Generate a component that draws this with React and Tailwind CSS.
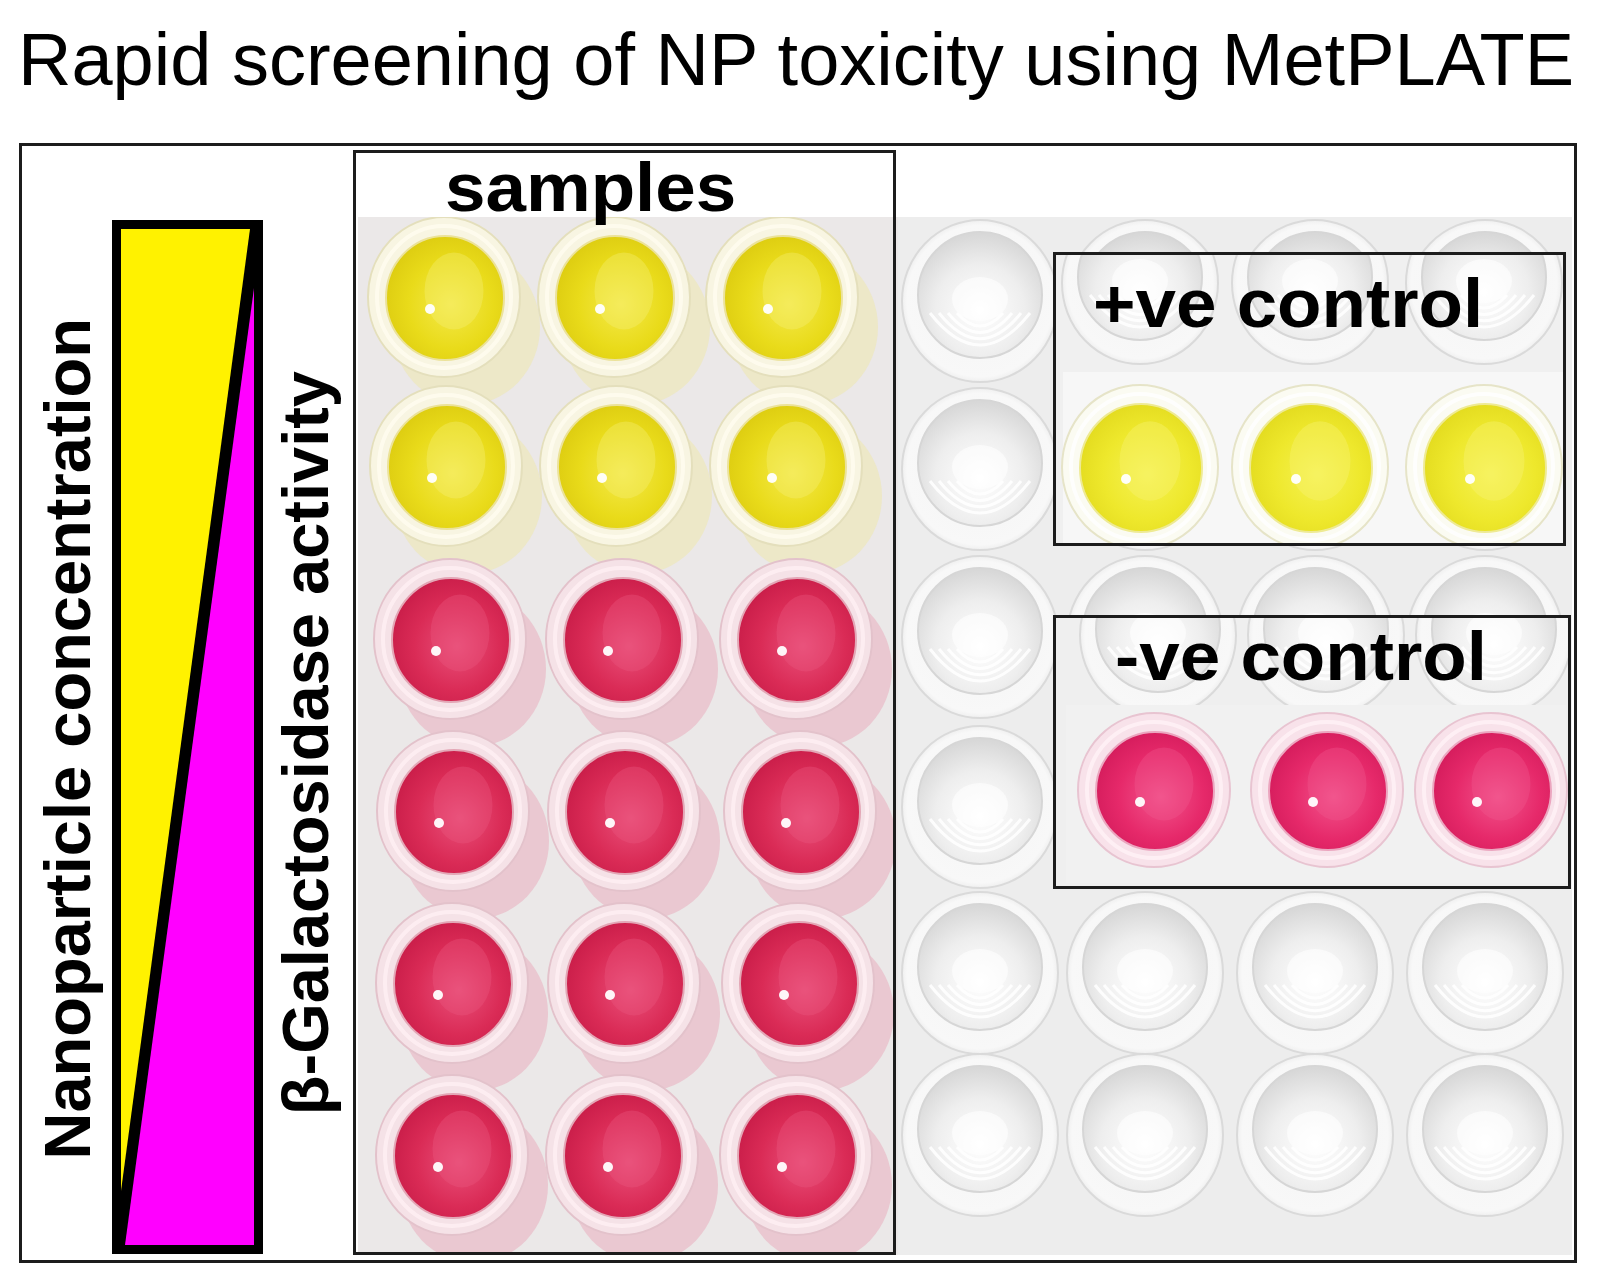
const TONES = {
  yellow: { rim: '#f8f5e2', edge: '#e4dfbc', ring: '#ebe29a', tube: '#efe8a8', glow: '#f7f07a', hi: '#fffdf0' },
  pink: { rim: '#f5e2e7', edge: '#e3c2cb', ring: '#e3a7b6', tube: '#eaa8ba', glow: '#ea5a80', hi: '#fff0f4' },
  cyellow: { rim: '#fbfbf2', edge: '#e6e4c8', ring: '#eeea94', tube: '#f1eebc', glow: '#f8f47a', hi: '#ffffff' },
  cpink: { rim: '#f8e2ea', edge: '#e8c4d1', ring: '#eba6bf', tube: '#f0bccd', glow: '#f25a8e', hi: '#fff2f6' },
};

const SAMPLE_ROWS = [
  { y: 80, tone: 'yellow', xs: [86, 256, 424] },
  { y: 249, tone: 'yellow', xs: [88, 258, 428] },
  { y: 422, tone: 'pink', xs: [92, 264, 438] },
  { y: 594, tone: 'pink', xs: [95, 266, 442] },
  { y: 766, tone: 'pink', xs: [94, 266, 440] },
  { y: 938, tone: 'pink', xs: [94, 264, 438] },
];

const EMPTY_COLS = [622, 787, 957, 1127];
const EMPTY_ROWS = [84, 252, 420, 590, 756, 918];

function Tube({ x, y, tone }) {
  return <ellipse cx={x + 22} cy={y + 30} rx="74" ry="78" fill={TONES[tone].tube} opacity="0.5" />;
}

function FilledWell({ x, y, tone, rx = 76, ry = 80 }) {
  const t = TONES[tone];
  return (
    <g>
      <ellipse cx={x} cy={y} rx={rx} ry={ry} fill={t.rim} stroke={t.edge} strokeWidth="2" />
      <ellipse cx={x} cy={y} rx={rx - 9} ry={ry - 9} fill="none" stroke={t.hi} strokeWidth="4" opacity="0.8" />
      <ellipse cx={x + 1} cy={y + 1} rx={rx - 17} ry={ry - 18} fill={`url(#${tone}Liquid)`} stroke={t.ring} strokeWidth="2" />
      <ellipse cx={x + 10} cy={y - 6} rx={(rx - 17) * 0.5} ry={(ry - 18) * 0.62} fill={t.glow} opacity="0.35" />
      <circle cx={x - 14} cy={y + 12} r="5" fill="#ffffff" opacity="0.95" />
    </g>
  );
}

function EmptyWell({ x, y, rx = 78, ry = 81 }) {
  return (
    <g>
      <ellipse cx={x} cy={y} rx={rx} ry={ry} fill="url(#emptyRim)" stroke="#dadada" strokeWidth="2" />
      <ellipse cx={x} cy={y - 6} rx={rx - 16} ry={ry - 18} fill="url(#emptyIn)" stroke="#d6d6d6" strokeWidth="2" />
      {[0, 9, 18, 27].map((d) => (
        <path
          key={d}
          d={`M ${x - 50 + d} ${y + 12} Q ${x} ${y + 76 - d * 1.4} ${x + 50 - d} ${y + 12}`}
          fill="none"
          stroke="#ffffff"
          strokeWidth="3"
          opacity="0.85"
        />
      ))}
      <ellipse cx={x} cy={y - 2} rx="28" ry="22" fill="#ffffff" opacity="0.6" />
    </g>
  );
}

function Liquid({ id, c0, c1, c2 }) {
  return (
    <radialGradient id={id} cx="55%" cy="55%" r="60%">
      <stop offset="0%" stopColor={c0} />
      <stop offset="60%" stopColor={c1} />
      <stop offset="100%" stopColor={c2} />
    </radialGradient>
  );
}

function PlatePhoto() {
  return (
    <svg width="1214" height="1038" viewBox="0 0 1214 1038" className="block">
      <defs>
        <Liquid id="yellowLiquid" c0="#f4e94a" c1="#e9db1a" c2="#dccb10" />
        <Liquid id="pinkLiquid" c0="#e9507a" c1="#da2b56" c2="#c81c48" />
        <Liquid id="cyellowLiquid" c0="#f5f252" c1="#eee82c" c2="#e2da1e" />
        <Liquid id="cpinkLiquid" c0="#f2548c" c1="#e6296a" c2="#d31b5b" />
        <radialGradient id="emptyRim" cx="50%" cy="50%" r="55%">
          <stop offset="0%" stopColor="#f4f4f4" />
          <stop offset="85%" stopColor="#f8f8f8" />
          <stop offset="100%" stopColor="#e2e2e2" />
        </radialGradient>
        <radialGradient id="emptyIn" cx="50%" cy="62%" r="60%">
          <stop offset="0%" stopColor="#ffffff" />
          <stop offset="60%" stopColor="#eeeeee" />
          <stop offset="100%" stopColor="#d8d8d8" />
        </radialGradient>
        <clipPath id="posClip">
          <rect x="695" y="35" width="513" height="294" />
        </clipPath>
        <clipPath id="negClip">
          <rect x="695" y="398" width="518" height="274" />
        </clipPath>
      </defs>

      <rect width="1214" height="1038" fill="#ededed" />
      <rect width="540" height="1038" fill="#ebe8e8" />

      {EMPTY_ROWS.map((y) =>
        EMPTY_COLS.map((x) => <EmptyWell key={`${x}-${y}`} x={x} y={y} />)
      )}

      {SAMPLE_ROWS.map((r) => r.xs.map((x) => <Tube key={`t${x}-${r.y}`} x={x} y={r.y} tone={r.tone} />))}
      {SAMPLE_ROWS.map((r) => r.xs.map((x) => <FilledWell key={`w${x}-${r.y}`} x={x} y={r.y} tone={r.tone} />))}

      <g clipPath="url(#posClip)">
        <rect x="695" y="35" width="513" height="294" fill="#f0f0f0" />
        {[782, 952, 1126].map((x) => (
          <EmptyWell key={`pe${x}`} x={x} y={66} />
        ))}
        <rect x="705" y="155" width="503" height="174" fill="#f7f7f7" />
        {[782, 952, 1126].map((x) => (
          <FilledWell key={`pw${x}`} x={x} y={250} tone="cyellow" rx={78} ry={82} />
        ))}
      </g>

      <g clipPath="url(#negClip)">
        <rect x="695" y="398" width="518" height="274" fill="#efefef" />
        {[800, 968, 1136].map((x) => (
          <EmptyWell key={`ne${x}`} x={x} y={418} />
        ))}
        <rect x="708" y="488" width="500" height="178" fill="#f1f1f1" />
        {[796, 969, 1133].map((x) => (
          <FilledWell key={`nw${x}`} x={x} y={573} tone="cpink" rx={76} ry={77} />
        ))}
      </g>
    </svg>
  );
}

function GradientBar() {
  return (
    <svg width="151" height="1034" viewBox="0 0 151 1034" className="block ml-[12px] mb-[6px] shrink-0">
      <rect width="151" height="1034" fill="#000000" />
      <polygon points="9,9 138,9 9,971" fill="#fff200" />
      <polygon points="142,68 142,1025 13,1025" fill="#ff00ff" />
    </svg>
  );
}

export default function App() {
  return (
    <div className="w-[1600px] h-[1272px] bg-white overflow-hidden font-['Liberation_Sans',Arial,sans-serif] text-black">
      <h1 className="h-[143px] pl-[18px] pt-[23px] text-[74px] leading-none font-normal whitespace-nowrap">
        Rapid screening of NP toxicity using MetPLATE
      </h1>

      <div className="ml-[19px] w-[1558px] h-[1120px] border-[3px] border-[#1c1c1c] flex">
        <div className="w-[331px] shrink-0 flex items-end">
          <span className="ml-[13px] mb-[100px] w-[65px] shrink-0 [writing-mode:vertical-rl] rotate-180 text-[65px] leading-none font-bold whitespace-nowrap">
            Nanoparticle concentration
          </span>
          <GradientBar />
          <span className="ml-[10px] mb-[145px] w-[65px] shrink-0 [writing-mode:vertical-rl] rotate-180 text-[65px] leading-none font-bold whitespace-nowrap">
            β-Galactosidase activity
          </span>
        </div>

        <div className="relative flex-1 pl-[5px] pt-[71px]">
          <PlatePhoto />

          <div className="absolute left-0 top-[4px] w-[543px] h-[1105px] border-[3px] border-[#1c1c1c]">
            <div className="pl-[89px] text-[68px] leading-none font-bold">
              <span className="inline-block origin-left scale-x-[1.07]">samples</span>
            </div>
          </div>

          <div className="absolute left-[700px] top-[106px] w-[513px] h-[294px] border-[3px] border-[#1c1c1c]">
            <div className="pl-[37px] pt-[14px] text-[68px] leading-none font-bold">
              <span className="inline-block origin-left scale-x-[1.07] whitespace-nowrap">+ve control</span>
            </div>
          </div>

          <div className="absolute left-[700px] top-[469px] w-[518px] h-[274px] border-[3px] border-[#1c1c1c]">
            <div className="pl-[59px] pt-[4px] text-[68px] leading-none font-bold">
              <span className="inline-block origin-left scale-x-[1.07] whitespace-nowrap">-ve control</span>
            </div>
          </div>
        </div>
      </div>
    </div>
  );
}
